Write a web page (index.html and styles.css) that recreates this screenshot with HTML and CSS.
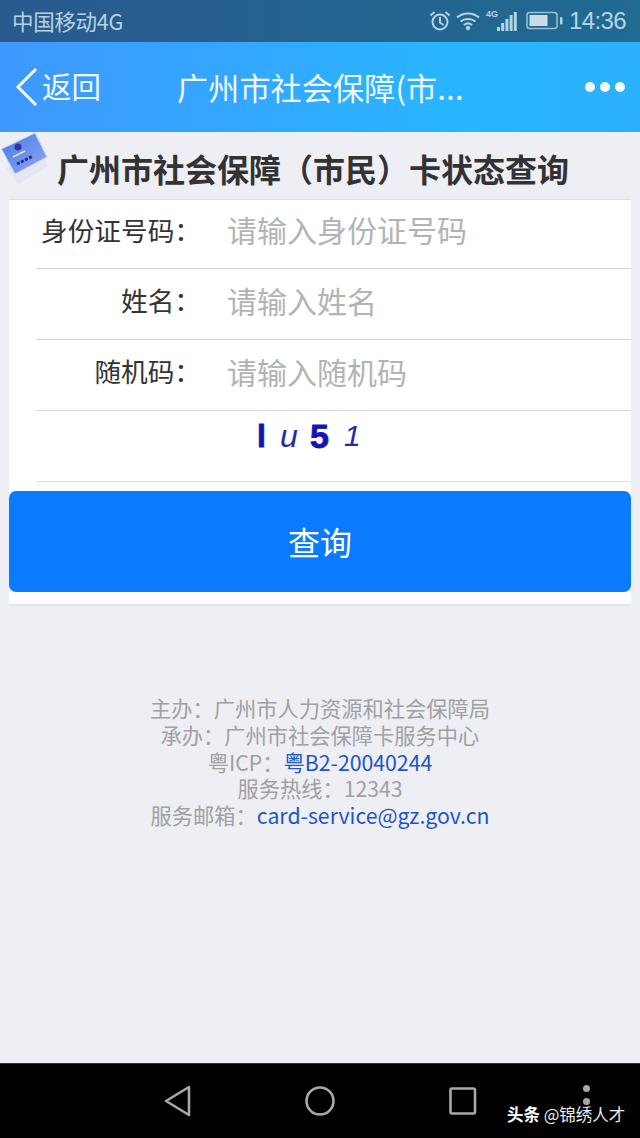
FILE: index.html
```html
<!DOCTYPE html>
<html lang="zh-CN">
<head>
<meta charset="utf-8">
<title>广州市社会保障(市民)卡状态查询</title>
<link rel="stylesheet" href="styles.css">
</head>
<body>
<div class="phone">
  <header class="statusbar">
    <span class="carrier">中国移动4G</span>
    <div class="status-right">
      <svg class="ic-alarm" width="22" height="22" viewBox="0 0 22 22" fill="none" stroke="#b4d3e2" stroke-width="2"><circle cx="11" cy="12" r="7.500"/><path d="M11 7v5.500l3.500 2.500M1.500 5.500 5.500 2M20.500 5.500 16.500 2"/></svg>
      <svg class="ic-wifi" width="24" height="20" viewBox="0 0 24 20" fill="none" stroke="#b4d3e2" stroke-width="2"><path d="M1 6.500c6-5.500 16-5.500 22 0M4.500 10.500c4-3.500 11-3.500 15 0M8 14c2.500-2 5.500-2 8 0"/><circle cx="12" cy="17" r="2.200" fill="#b4d3e2" stroke="none"/></svg>
      <div class="signal">
        <span class="net">4G</span>
        <svg width="20" height="19" viewBox="0 0 20 19" fill="#b4d3e2"><rect x="0" y="15" width="3" height="4"/><rect x="4.200" y="11" width="3" height="8"/><rect x="8.400" y="7" width="3" height="12"/><rect x="12.600" y="3" width="3" height="16"/><rect x="16.800" y="0" width="3" height="19"/></svg>
      </div>
      <svg class="ic-batt" width="37" height="20" viewBox="0 0 37 20" fill="none"><rect x="1" y="1.500" width="30" height="16" rx="2.500" stroke="#9cc0d2" stroke-width="1.500"/><rect x="3.500" y="4" width="18" height="11" fill="#c8dde6"/><rect x="34" y="6" width="2.500" height="7.500" rx="1" fill="#b4d3e2"/></svg>
      <span class="time">14:36</span>
    </div>
  </header>

  <nav class="navbar">
    <div class="nav-back">
      <svg width="24" height="40" viewBox="0 0 24 40" fill="none" stroke="#f2f8ff" stroke-width="3"><path d="M21 2 3 20l18 18"/></svg>
      <span>返回</span>
    </div>
    <div class="nav-title">广州市社会保障(市...</div>
    <div class="nav-more"><i></i><i></i><i></i></div>
  </nav>

  <main class="content">
    <div class="page-head">
      <svg class="card-icon" width="52" height="56" viewBox="0 0 52 56">
        <defs>
          <linearGradient id="cardFill" x1="0" y1="0" x2="1" y2="1">
            <stop offset="0" stop-color="#3f7ce8"/>
            <stop offset="1" stop-color="#98a6f2"/>
          </linearGradient>
        </defs>
        <path d="M6 36 40 20l8 14-30 18z" fill="#e2e3ee" opacity=".8"/>
        <path d="M1.500 17 35 1l12 24-32 17z" fill="url(#cardFill)" stroke="#cfd6f2"/>
        <circle cx="18" cy="15" r="3.500" fill="#3a2f9e"/>
        <path d="m13 25 12-6" stroke="#e8e0b0" stroke-width="1.500"/>
        <path d="m17 32 16-8" stroke="#23309c" stroke-width="3" stroke-dasharray="3 1.500"/>
      </svg>
      <h1>广州市社会保障&#xFF08;市民&#xFF09;卡状态查询</h1>
    </div>

    <form class="panel">
      <div class="field">
        <label>身份证号码&#xFF1A;</label>
        <span class="placeholder">请输入身份证号码</span>
      </div>
      <div class="field">
        <label>姓名&#xFF1A;</label>
        <span class="placeholder">请输入姓名</span>
      </div>
      <div class="field">
        <label>随机码&#xFF1A;</label>
        <span class="placeholder">请输入随机码</span>
      </div>
      <div class="captcha-row">
        <div class="captcha">
          <span class="cap-l">l</span>
          <span class="cap-u">u</span>
          <span class="cap-5">5</span>
          <span class="cap-1">1</span>
        </div>
      </div>
      <button type="button" class="submit">查询</button>
    </form>

    <footer class="info">
      <p>主办&#xFF1A;广州市人力资源和社会保障局</p>
      <p>承办&#xFF1A;广州市社会保障卡服务中心</p>
      <p>粤ICP&#xFF1A;<a>粤B2-20040244</a></p>
      <p>服务热线&#xFF1A;12343</p>
      <p>服务邮箱&#xFF1A;<a>card-service@gz.gov.cn</a></p>
    </footer>
  </main>

  <div class="sysnav">
    <svg class="sys-back" width="28" height="34" viewBox="0 0 28 34" fill="none" stroke="#a8a8a8" stroke-width="2.600" stroke-linejoin="round"><path d="M25 3v28L2 17z"/></svg>
    <svg class="sys-home" width="30" height="30" viewBox="0 0 30 30" fill="none" stroke="#a8a8a8" stroke-width="2.600"><circle cx="15" cy="15" r="13.500"/></svg>
    <svg class="sys-recent" width="28" height="28" viewBox="0 0 28 28" fill="none" stroke="#a8a8a8" stroke-width="2.600" stroke-linejoin="round"><rect x="1.500" y="1.500" width="24.500" height="25" rx="1.500"/></svg>
    <div class="sys-dots"><i></i><i></i></div>
    <div class="watermark"><b>头条</b> @锦绣人才</div>
  </div>
</div>
</body>
</html>
```

FILE: styles.css
```css
* { box-sizing: border-box; }
html, body { margin: 0; padding: 0; }
body { font-family: "Noto Sans CJK SC", "Noto Sans", sans-serif; background: #eeeff5; }

.phone { width: 640px; height: 1138px; display: flex; flex-direction: column; overflow: hidden; }

/* status bar */
.statusbar {
  height: 42px; flex: none; display: flex; align-items: center; justify-content: space-between;
  padding: 0 15px 0 12px;
  background: linear-gradient(90deg, #2a5a8e, #1f6b91);
  color: #b4d3e2;
}
.carrier { font-size: 21.500px; line-height: 42px; letter-spacing: -.3px; }
.status-right { display: flex; align-items: center; }
.ic-alarm { margin-right: 5px; }
.ic-wifi { margin-right: 6px; }
.signal { position: relative; width: 31px; height: 20px; display: flex; align-items: flex-end; justify-content: flex-end; margin-right: 9px; }
.net { position: absolute; left: 0; top: -2px; font: bold 9px/11px "Liberation Sans", sans-serif; }
.ic-batt { margin-right: 6px; }
.time { font: 24px/42px "Liberation Sans", sans-serif; letter-spacing: -.6px; width: 56px; white-space: nowrap; }

/* app nav */
.navbar {
  height: 90px; flex: none; display: flex; align-items: center; position: relative;
  background: linear-gradient(90deg, #3f98ff, #27b7ff 75%, #2cb0fb);
  color: #f2f8ff;
}
.nav-back { display: flex; align-items: center; gap: 3px; margin-left: 15px; font-size: 29.500px; }
.nav-back span { position: relative; top: -2px; }
.nav-title { position: absolute; left: 177px; top: 21px; font-size: 31px; line-height: 48px; white-space: nowrap; letter-spacing: .2px; }
.nav-more { margin-left: auto; margin-right: 15px; display: flex; gap: 5px; }
.nav-more i { width: 10px; height: 10px; border-radius: 50%; background: #f5faff; display: block; }

/* content */
.content { flex: 1; display: flex; flex-direction: column; }
.page-head { height: 67px; flex: none; position: relative; padding-left: 57px; display: flex; align-items: center; }
.card-icon { position: absolute; left: 0; top: 0; }
.page-head h1 { margin: 0; font-size: 32px; line-height: 44px; font-weight: 700; color: #333; white-space: nowrap; position: relative; top: 2px; }

.panel {
  margin: 0 9px; background: #fff; height: 407px; flex: none;
  border-top: 1px solid #dcdde0; border-bottom: 2px solid #e3e4ea;
  display: flex; flex-direction: column;
}
.field {
  height: 71px; flex: none; margin-left: 27px; border-bottom: 1px solid #d6d6d8;
  display: flex; align-items: center; padding-bottom: 9px;
}
.field:first-child { height: 69px; padding-bottom: 10px; }
.field label { width: 192px; margin-left: -27px; text-align: right; font-size: 26.670px; color: #333; flex: none; white-space: nowrap; }
.placeholder { margin-left: 26px; font-size: 30px; color: #b3b3b3; white-space: nowrap; }

.captcha-row { height: 71px; flex: none; margin-left: 27px; border-bottom: 1px solid #d8dde6; }
.captcha { height: 50px; margin-left: 221px; display: flex; align-items: center; color: #1414b4; font-family: "Liberation Sans", sans-serif; }
.cap-l { font-size: 32px; font-weight: 700; width: 23px; -webkit-text-stroke: .8px #1414b4; }
.cap-u { font-size: 32px; font-style: italic; width: 30px; color: #2828a8; }
.cap-5 { font-size: 34px; font-weight: 700; width: 34px; -webkit-text-stroke: .8px #1414b4; }
.cap-1 { font-size: 30px; font-style: italic; color: #2828a8; }

.submit {
  display: block; width: 100%; height: 101px; flex: none; margin-top: 9px; border: 0; border-radius: 7px;
  background: #0a7bff; color: #fff; font: 32px/1 "Noto Sans CJK SC", sans-serif; padding: 0 0 2px;
}

.info { margin-top: 89px; text-align: center; color: #a0a0a5; font-size: 21.250px; line-height: 26.750px; }
.info p { margin: 0; white-space: nowrap; }
.info a { color: #1e55c4; }

/* system nav */
.sysnav { height: 75px; flex: none; background: #000; border-top: 1px solid #333; position: relative; display: flex; align-items: center; }
.sys-back { margin-left: 164px; }
.sys-home { margin-left: 113px; }
.sys-recent { margin-left: 114px; }
.sys-dots { position: absolute; left: 583px; top: 21px; display: flex; flex-direction: column; gap: 6px; }
.sys-dots i { display: block; width: 7px; height: 7px; border-radius: 50%; background: #a8a8a8; }
.watermark { position: absolute; left: 507px; top: 38px; font-size: 16.500px; line-height: 24px; color: #eee; white-space: nowrap; }
.watermark b { color: #fff; font-weight: 700; }
```
